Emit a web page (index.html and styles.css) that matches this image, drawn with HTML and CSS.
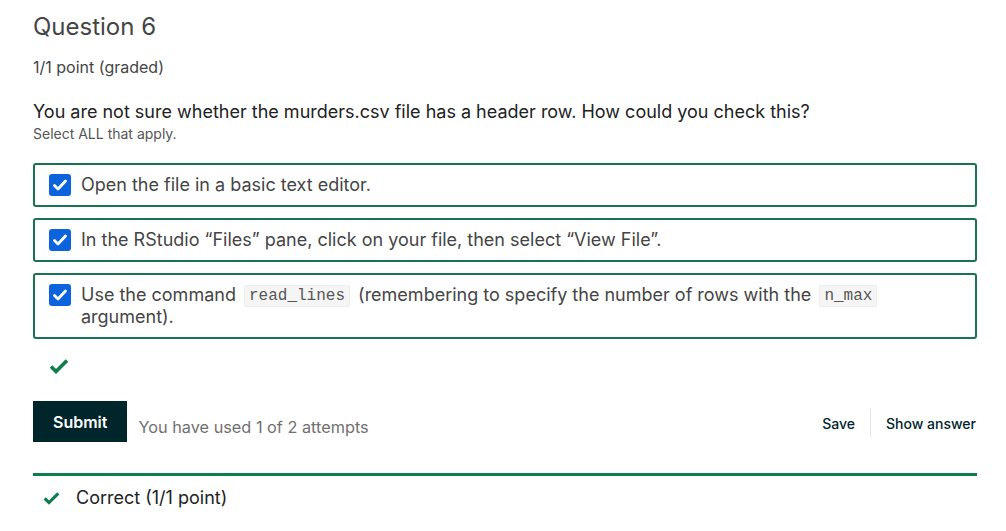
FILE: index.html
```html
<!DOCTYPE html>
<html>
<head>
<meta charset="utf-8">
<link rel="stylesheet" href="styles.css">
</head>
<body>
<div class="problem">
  <h3 class="title">Question 6</h3>
  <div class="points">1/1 point (graded)</div>
  <p class="prompt">You are not sure whether the murders.csv file has a header row. How could you check this?</p>
  <div class="hint">Select ALL that apply.</div>
  <div class="choices">
    <label class="choice">
      <span class="box"><svg viewBox="0 0 22 22" width="22" height="22"><path d="M5.5 11.5l3.5 3.5 7.5-8" fill="none" stroke="#fff" stroke-width="2.8" stroke-linecap="round" stroke-linejoin="round"/></svg></span>
      <span class="text">Open the file in a basic text editor.</span>
    </label>
    <label class="choice">
      <span class="box"><svg viewBox="0 0 22 22" width="22" height="22"><path d="M5.5 11.5l3.5 3.5 7.5-8" fill="none" stroke="#fff" stroke-width="2.8" stroke-linecap="round" stroke-linejoin="round"/></svg></span>
      <span class="text">In the RStudio “Files” pane, click on your file, then select “View File”.</span>
    </label>
    <label class="choice">
      <span class="box"><svg viewBox="0 0 22 22" width="22" height="22"><path d="M5.5 11.5l3.5 3.5 7.5-8" fill="none" stroke="#fff" stroke-width="2.8" stroke-linecap="round" stroke-linejoin="round"/></svg></span>
      <span class="text">Use the command <code>read_lines</code> (remembering to specify the number of rows with the <code>n_max</code> argument).</span>
    </label>
  </div>
  <div class="status"><svg viewBox="0 0 20 16" width="20" height="16"><path d="M2 8.5l5 5L18 2.5" fill="none" stroke="#0d7d4d" stroke-width="3.6" stroke-linejoin="miter"/></svg></div>
  <div class="actions">
    <button class="submit">Submit</button>
    <span class="attempts">You have used 1 of 2 attempts</span>
    <div class="right">
      <span class="link">Save</span>
      <span class="sep"></span>
      <span class="link">Show answer</span>
    </div>
  </div>
  <div class="notification">
    <svg viewBox="0 0 20 16" width="17" height="14"><path d="M2 8.5l5 5L18 2.5" fill="none" stroke="#0d7d4d" stroke-width="3.6"/></svg>
    <span>Correct (1/1 point)</span>
  </div>
</div>
</body>
</html>
```

FILE: styles.css
```css
* { box-sizing: border-box; }
body {
  margin: 0;
  background: #fff;
  font-family: Inter, "Noto Sans", sans-serif;
  color: #454545;
}
.problem {
  padding: 12px 29px 0 33px;
}
.title {
  margin: 0;
  font-size: 24px;
  font-weight: 400;
  line-height: 30px;
  color: #454545;
}
.points {
  margin-top: 15px;
  font-size: 16px;
  line-height: 20px;
  color: #454545;
}
.prompt {
  margin: 23px 0 0;
  font-size: 18px;
  line-height: 24px;
  color: #222;
}
.hint {
  font-size: 14px;
  line-height: 20px;
  color: #555;
}
.choices {
  margin-top: 19px;
  display: flex;
  flex-direction: column;
  gap: 11px;
}
.choice {
  display: flex;
  align-items: flex-start;
  gap: 10px;
  border: 2px solid #1a7350;
  border-radius: 3px;
  padding: 9px 14px 9px;
  min-height: 44px;
}
.box {
  flex: none;
  width: 22px;
  height: 22px;
  background: #0b63de;
  border-radius: 3px;
  display: flex;
}
.text {
  font-size: 18px;
  line-height: 22px;
  color: #454545;
}
code {
  font-family: "Liberation Mono", monospace;
  font-size: 16px;
  line-height: 1;
  background: #f5f5f5;
  border: 1px solid #eee;
  border-radius: 2px;
  padding: 1px 4px;
  color: #555;
  margin: 0 3px;
  vertical-align: 1px;
}
.status {
  margin-top: 19px;
  padding-left: 16px;
  height: 16px;
  display: flex;
}
.actions {
  margin-top: 27px;
  display: flex;
  align-items: center;
}
.submit {
  background: #00262b;
  color: #fff;
  border: 0;
  font-family: inherit;
  font-size: 16px;
  font-weight: 600;
  height: 41px;
  padding: 0 20px;
  border-radius: 0;
}
.attempts {
  margin-left: 11px;
  margin-top: 10px;
  font-size: 16.3px;
  color: #707070;
}
.right {
  margin-left: auto;
  display: flex;
  align-items: center;
  margin-top: 3px;
}
.link {
  font-size: 14px;
  font-weight: 500;
  color: #00262b;
  padding: 0 1px;
}
.sep {
  width: 1px;
  height: 28px;
  background: #e4e4e4;
  margin: 0 14px;
}
.notification {
  margin-top: 31px;
  border-top: 3px solid #0d7d4d;
  display: flex;
  align-items: center;
  gap: 16px;
  padding: 11px 0 0 10px;
  font-size: 18px;
  color: #222;
}
```
